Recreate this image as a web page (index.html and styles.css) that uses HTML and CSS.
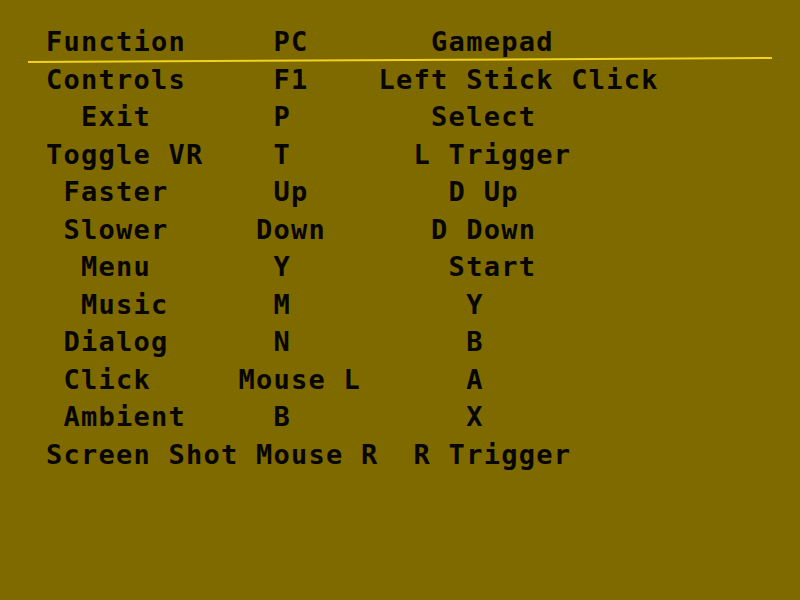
FILE: index.html
```html
<!DOCTYPE html>
<html>
<head>
<meta charset="utf-8">
<link rel="stylesheet" href="styles.css">
</head>
<body>
<div class="sheet">
<div class="row head">Function     PC       Gamepad</div>
<div class="row">Controls     F1    Left Stick Click</div>
<div class="row">  Exit       P        Select</div>
<div class="row">Toggle VR    T       L Trigger</div>
<div class="row"> Faster      Up        D Up</div>
<div class="row"> Slower     Down      D Down</div>
<div class="row">  Menu       Y         Start</div>
<div class="row">  Music      M          Y</div>
<div class="row"> Dialog      N          B</div>
<div class="row"> Click     Mouse L      A</div>
<div class="row"> Ambient     B          X</div>
<div class="row">Screen Shot Mouse R  R Trigger</div>
</div>
</body>
</html>
```
FILE: styles.css
```css
html, body {
  margin: 0;
  padding: 0;
  width: 800px;
  height: 600px;
  background: #7f6a00;
  overflow: hidden;
}
.sheet {
  padding: 23px 0 0 46px;
  font-family: "DejaVu Sans Mono", monospace;
  font-weight: bold;
  font-size: 27px;
  letter-spacing: 1.25px;
  line-height: 37.5px;
  color: #080600;
}
.row {
  white-space: pre;
}
.head {
  position: relative;
}
.head::after {
  content: "";
  position: absolute;
  left: -18px;
  bottom: 0;
  width: 744px;
  height: 2px;
  background: #f2d21e;
  transform: rotate(-0.3deg);
}
```
